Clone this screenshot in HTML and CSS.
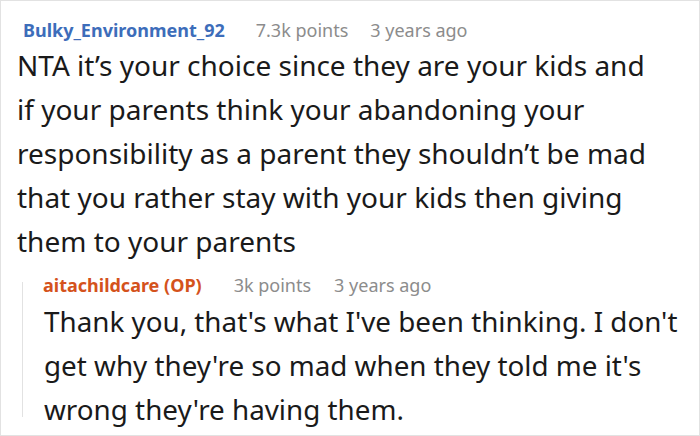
FILE: index.html
```html
<!DOCTYPE html>
<html>
<head>
<meta charset="utf-8">
<link rel="stylesheet" href="styles.css">
</head>
<body>
<div class="thread">
  <div class="comment">
    <div class="meta">
      <span class="author">Bulky_Environment_92</span>
      <span class="info">7.3k points</span>
      <span class="info">3 years ago</span>
    </div>
    <p class="text">NTA it’s your choice since they are your kids and if your parents think your abandoning your responsibility as a parent they shouldn’t be mad that you rather stay with your kids then giving them to your parents</p>
  </div>
  <div class="reply">
    <div class="reply-line"></div>
    <div class="reply-body">
      <div class="meta">
        <span class="author op">aitachildcare (OP)</span>
        <span class="info">3k points</span>
        <span class="info">3 years ago</span>
      </div>
      <p class="text">Thank you, that's what I've been thinking. I don't get why they're so mad when they told me it's wrong they're having them.</p>
    </div>
  </div>
</div>
</body>
</html>
```
FILE: styles.css
```css
html, body {
  margin: 0;
  padding: 0;
  background: #ffffff;
}
.thread {
  width: 700px;
  height: 436px;
  box-sizing: border-box;
  border: 1px solid #e2e2e2;
  font-family: "Noto Sans", sans-serif;
  padding: 16px 0 0 16px;
  overflow: hidden;
}
.comment {
  padding-right: 40px;
}
.meta {
  display: flex;
  gap: 22px;
  align-items: baseline;
  line-height: 26px;
  padding-left: 6px;
}
.author {
  font-size: 18px;
  font-weight: 700;
  color: #3d6dba;
  margin-right: 9px;
}
.author.op {
  color: #d4521c;
}
.info {
  font-size: 18px;
  color: #8c8c8c;
}
.text {
  margin: 0;
  font-size: 28px;
  line-height: 44px;
  color: #1a1a1a;
}
.reply {
  display: flex;
  margin: 9px 0 0 5px;
}
.reply-line {
  flex: 0 0 1px;
  background: #e2e2e2;
  margin: 10px 0 14px;
}
.reply-body {
  flex: 1;
  padding-left: 21px;
}
.reply .meta {
  padding-left: 0;
  margin-left: -1px;
  gap: 23px;
}
.reply .text {
  margin-top: 1px;
  font-size: 27.8px;
}
```
